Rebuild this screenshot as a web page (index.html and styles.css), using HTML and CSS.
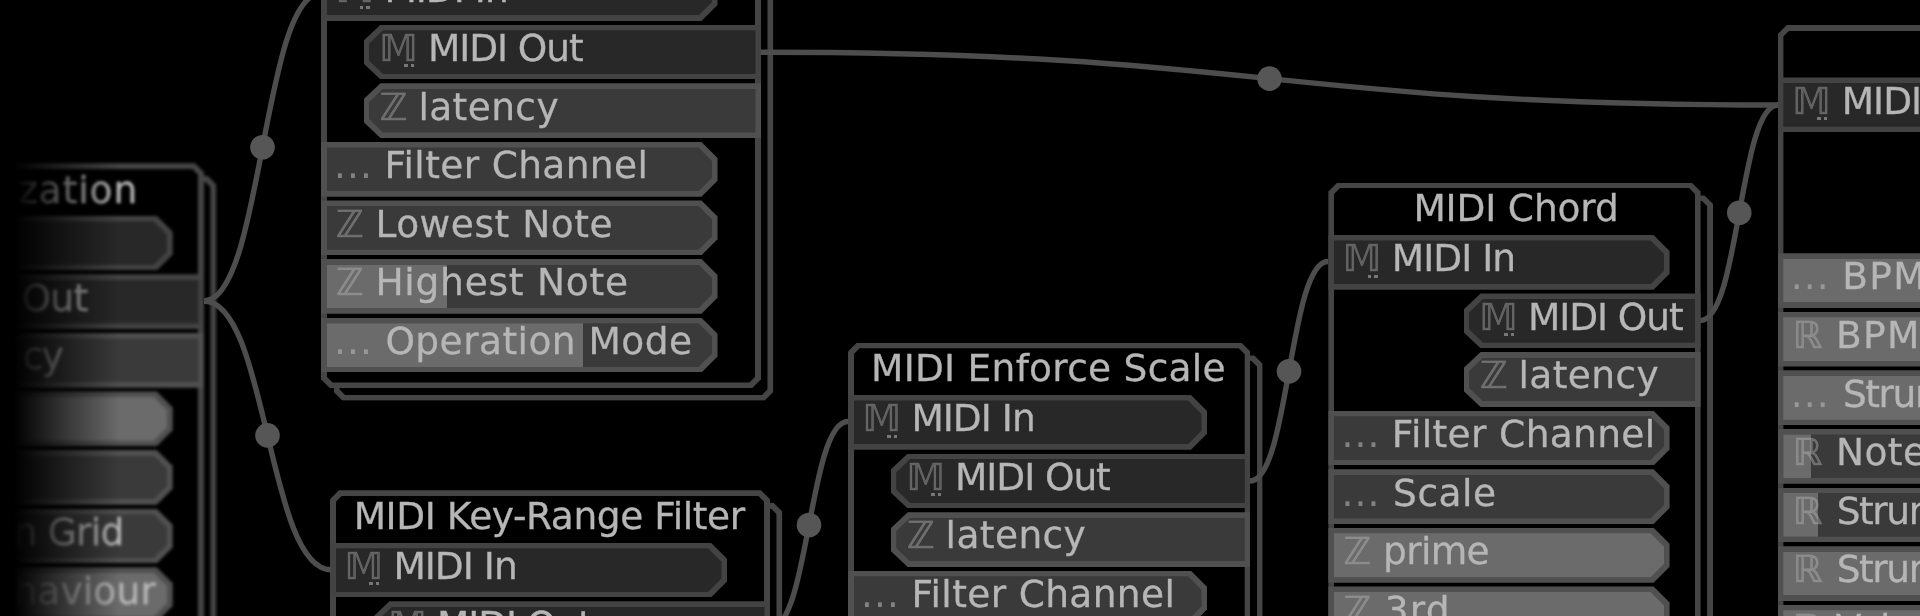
FILE: index.html
```html
<!DOCTYPE html>
<html lang="en">
<head>
<meta charset="utf-8">
<title>Node graph</title>
<link rel="stylesheet" href="styles.css">
</head>
<body>
<main class="canvas" id="canvas"></main>
<svg class="wires" id="wires" width="1920" height="616"></svg>
<div class="fade"></div>
<script src="graph.js"></script>
</body>
</html>
```

FILE: styles.css
```css
body {
  margin: 0;
  background: #000;
  overflow: hidden;
  font-family: "DejaVu Sans", sans-serif;
}

.canvas {
  position: relative;
  width: 1920px;
  height: 616px;
  overflow: hidden;
  filter: blur(0.75px);
}

.node {
  position: absolute;
  --edge: 5.6px;
}

.node--soft {
  filter: blur(1.4px);
}

.frame {
  position: absolute;
  inset: 0;
  background: #454545;
  clip-path: polygon(9px 0, calc(100% - 9px) 0, 100% 9px, 100% calc(100% - 9px), calc(100% - 9px) 100%, 9px 100%, 0 calc(100% - 9px), 0 9px);
}

.frame::before {
  content: "";
  position: absolute;
  inset: var(--edge);
  background: #000;
  clip-path: polygon(6px 0, calc(100% - 6px) 0, 100% 6px, 100% calc(100% - 6px), calc(100% - 6px) 100%, 6px 100%, 0 calc(100% - 6px), 0 6px);
}

.frame--back {
  transform: translate(12.5px, 12.5px);
}

.body {
  position: relative;
  display: flex;
  flex-direction: column;
  gap: 3.8px;
}

.title {
  height: 48.6px;
}

.row {
  --line: #505050;
  --fill: #3a3a3a;
  position: relative;
  flex: none;
  height: 54.8px;
  background: var(--line);
  clip-path: polygon(0 0, calc(100% - 16px) 0, 100% 16px, 100% calc(100% - 16px), calc(100% - 16px) 100%, 0 100%);
}

.row--out {
  align-self: flex-end;
  clip-path: polygon(17px 0, 100% 0, 100% 100%, 17px 100%, 0 calc(100% - 16px), 0 16px);
}

.row--midi {
  --line: #434343;
  --fill: #282828;
}

.row--blank {
  visibility: hidden;
}

.well {
  position: absolute;
  inset: 5.5px;
  background: var(--fill);
  clip-path: polygon(0 0, calc(100% - 13.5px) 0, 100% 13.5px, 100% calc(100% - 13.5px), calc(100% - 13.5px) 100%, 0 100%);
}

.row--out .well {
  clip-path: polygon(14px 0, 100% 0, 100% 100%, 14px 100%, 0 calc(100% - 13.5px), 0 13.5px);
}

.bar {
  height: 100%;
  background: #6b6b6b;
}

.ink {
  position: absolute;
  top: 0;
  line-height: 44px;
  font-size: 37.5px;
  white-space: pre;
  color: #b6b6b6;
  -webkit-text-stroke: 0.3px #b6b6b6;
}

.icon {
  color: rgba(190, 190, 190, 0.36);
  -webkit-text-stroke: 0.6px rgba(190, 190, 190, 0.3);
}

.icon--dots {
  color: rgba(190, 190, 190, 0.55);
  -webkit-text-stroke: 0;
}

.sub {
  position: absolute;
  top: 39.8px;
  width: 10px;
  height: 3px;
  background: linear-gradient(90deg, #777 3.5px, transparent 3.5px 6.5px, #777 6.5px);
}

.wires {
  position: absolute;
  left: 0;
  top: 0;
  fill: none;
  stroke: #4d4d4d;
  stroke-width: 5.4;
  filter: blur(0.7px);
}

.wires circle {
  fill: #565656;
  stroke: none;
}

.fade {
  position: absolute;
  left: 0;
  top: 0;
  width: 130px;
  height: 616px;
  background: linear-gradient(90deg, #000 14px, rgba(0, 0, 0, 0.5) 65px, transparent 120px);
}
```

FILE: graph.js
```js
const FONT = 'DejaVu Sans';
const SIZE = 37.5;
const ctx = document.createElement('canvas').getContext('2d');

// Row tuple: [direction, icon, label, label x, label ink width, chip width, bar width]
const nodes = [
  { x: -230, y: 163.3, w: 434, h: 600, soft: true, title: ['ization', 239.5, 125, 5],
    rows: [
      ['in', '', '', 0, 0, 402.7],
      ['out', 'm', 'Out', 0, 64, 434, 0, 253],
      ['out', '', 'cy', 0, 39, 434, 0, 254],
      ['in', '', '', 0, 0, 402.7, 999],
      ['in', '', '', 0, 0, 402.7],
      ['in', '', 'n Grid', 246, 105, 402.7],
      ['in', '', 'haviour', 246, 140, 402.7, 999]
    ] },
  { x: 321, y: -86.3, w: 440, h: 474.5, title: null,
    rows: [
      ['in', 'M', 'MIDI In', 66, 118.5, 396.5],
      ['out', 'M', 'MIDI Out', 67, 152, 397.5],
      ['out', 'Z', 'latency', 57.5, 137, 397.5],
      ['in', '.', 'Filter Channel', 66, 257, 396.5],
      ['in', 'Z', 'Lowest Note', 57, 233, 396.5],
      ['in', 'Z', 'Highest Note', 57, 248.5, 396.5, 120.5],
      ['in', '.', 'Operation Mode', 66, 303.5, 396.5, 256]
    ] },
  { x: 330, y: 490.3, w: 440, h: 500, title: ['MIDI Key-Range Filter', 26.7, 389],
    rows: [
      ['in', 'M', 'MIDI In', 66, 118.5, 397],
      ['out', 'M', 'MIDI Out', 67, 152, 397.5]
    ] },
  { x: 848, y: 342.6, w: 402.3, h: 500, title: ['MIDI Enforce Scale', 26, 350.5],
    rows: [
      ['in', 'M', 'MIDI In', 66, 118.5, 359],
      ['out', 'M', 'MIDI Out', 67, 152, 359.6],
      ['out', 'Z', 'latency', 57.5, 137, 359.6],
      ['in', '.', 'Filter Channel', 66, 257, 359]
    ] },
  { x: 1328.4, y: 182.5, w: 372.2, h: 700, title: ['MIDI Chord', 88, 199.5],
    rows: [
      ['in', 'M', 'MIDI In', 66, 118.5, 341.2],
      ['out', 'M', 'MIDI Out', 67, 152, 237],
      ['out', 'Z', 'latency', 57.5, 137, 237],
      ['in', '.', 'Filter Channel', 66, 257, 341.2],
      ['in', '.', 'Scale', 66.3, 100, 341.2],
      ['in', 'Z', 'prime', 57.3, 102.5, 341.2, 999],
      ['in', 'Z', '3rd', 58, 60, 341.2, 999]
    ] },
  { x: 1777.8, y: 25, w: 500, h: 900, title: null,
    rows: [
      ['in', 'M', 'MIDI In', 66.5, 118.5, 460],
      null,
      null,
      ['in', '.', 'BPM', 67, 77, 460, 999],
      ['in', 'R', 'BPM', 60.7, 77, 460, 999],
      ['in', '.', 'Strum', 66.7, 104, 460, 999],
      ['in', 'R', 'Note', 60.7, 86, 460, 28],
      ['in', 'R', 'Strum', 60.5, 104, 460, 35],
      ['in', 'R', 'Strum', 60.5, 104, 460, 999],
      ['in', 'R', 'Velocity', 57.5, 142, 460, 999]
    ] }
];

const wires = [
  [204, 301, 321, -6.6],
  [204, 301, 331, 569.8],
  [761, 52.3, 1778, 105],
  [770, 628.5, 848, 421.5],
  [1250, 481, 1328, 261.5],
  [1700.5, 320.5, 1778, 105]
];

function el(cls, parent) {
  const e = document.createElement('div');
  e.className = cls;
  parent.appendChild(e);
  return e;
}

// Tracks the label so that its ink spans exactly [x, x + width].
function ink(parent, text, x, width, top, cls) {
  ctx.font = `${SIZE}px "${FONT}"`;
  const m = ctx.measureText(text);
  const natural = m.actualBoundingBoxRight + m.actualBoundingBoxLeft;
  const gaps = Math.max([...text].length - 1, 1);
  const e = el('ink ' + (cls || ''), parent);
  e.textContent = text;
  if ([...text].length > 1) e.style.letterSpacing = (width - natural) / gaps + 'px';
  e.style.left = x + m.actualBoundingBoxLeft + 'px';
  e.style.top = top + 'px';
}

const canvas = document.getElementById('canvas');
for (const n of nodes) {
  const node = el('node' + (n.soft ? ' node--soft' : ''), canvas);
  node.style.cssText = `left:${n.x}px;top:${n.y}px;width:${n.w}px;height:${n.h}px`;
  el('frame frame--back', node);
  el('frame', node);
  const body = el('body', node);
  const title = el('title', body);
  if (n.title) ink(title, n.title[0], n.title[1], n.title[2], n.title[3] || 3.5);
  for (const r of n.rows) {
    if (!r) { el('row row--blank', body); continue; }
    const [dir, icon, label, x, w, width, bar, shift] = r;
    const midi = /M|m/.test(icon) || (n.soft && r === n.rows[0]);
    const row = el('row' + (dir === 'out' ? ' row--out' : '') + (midi ? ' row--midi' : ''), body);
    row.style.width = width + 'px';
    const well = el('well', row);
    if (bar) el('bar', well).style.width = bar === 999 ? '100%' : bar + 'px';
    const ix = dir === 'out' ? 18 : 16.7;
    if (icon === 'M') {
      ink(row, '\u{1D544}', ix + 0.7, 32, 1.3, 'icon');
      el('sub', row).style.left = ix + 22.5 + 'px';
    }
    if (icon === 'Z') ink(row, '\u2124', ix - 0.7, 26, 1.3, 'icon');
    if (icon === 'R') ink(row, '\u211D', ix + 1, 26, 1.3, 'icon');
    if (icon === '.') ink(row, '...', ix + 0.3, 30, 1.3, 'icon--dots');
    if (label) ink(row, label, (shift || x) + 0.4, w, 1.3);
  }
}

const ns = 'http://www.w3.org/2000/svg';
const layer = document.getElementById('wires');
for (const [x1, y1, x2, y2] of wires) {
  const mx = (x1 + x2) / 2;
  const p = document.createElementNS(ns, 'path');
  p.setAttribute('d', `M${x1} ${y1} C${mx} ${y1} ${mx} ${y2} ${x2} ${y2}`);
  layer.appendChild(p);
  const c = document.createElementNS(ns, 'circle');
  c.setAttribute('cx', mx);
  c.setAttribute('cy', (y1 + y2) / 2);
  c.setAttribute('r', 12.3);
  layer.appendChild(c);
}
```
